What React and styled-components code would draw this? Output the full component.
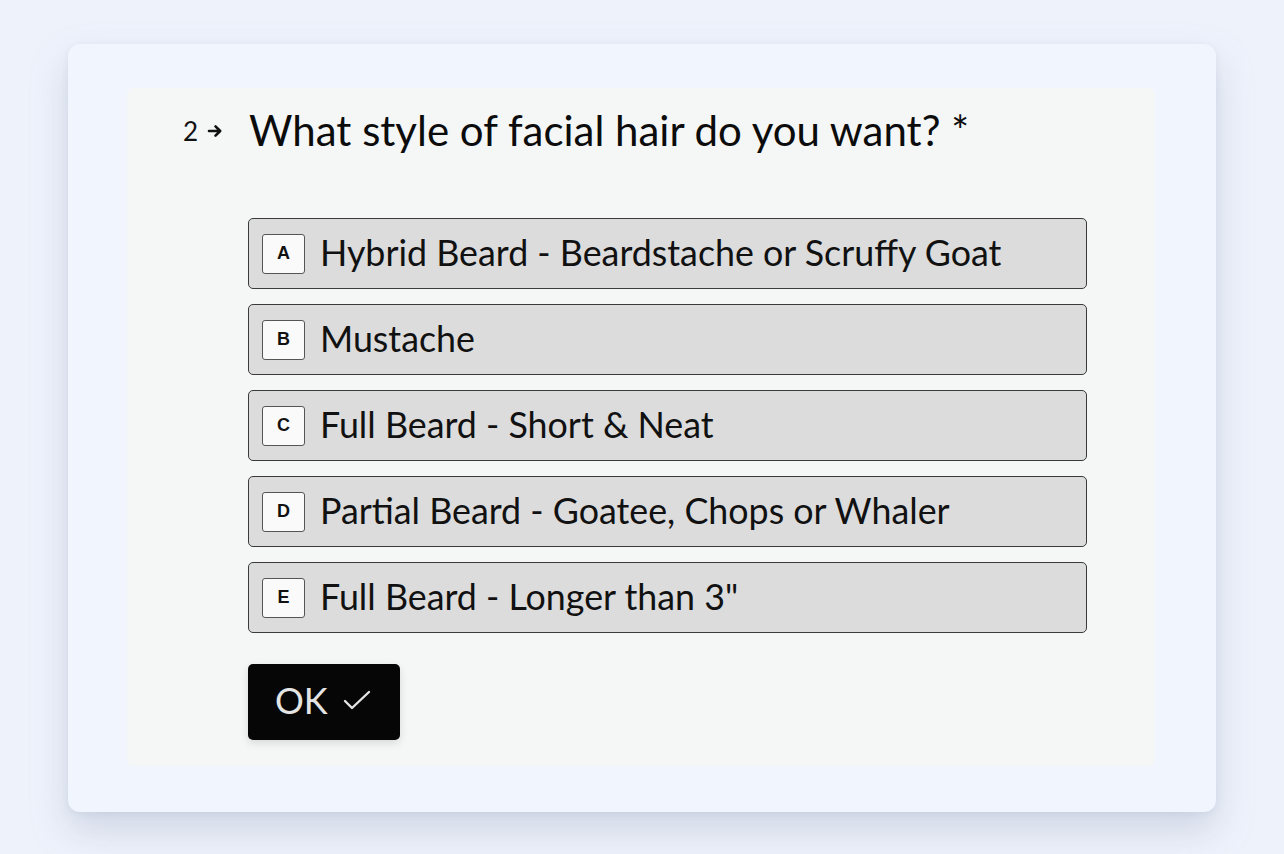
import React from "react";
import styled, { createGlobalStyle } from "styled-components";

const Global = createGlobalStyle`
  html, body { margin: 0; padding: 0; background: #eef2fb; }
  body { font-family: Lato, "Noto Sans", sans-serif; }
  * { box-sizing: border-box; }
`;

const Page = styled.div`
  padding: 44px 68px 42px 68px;
  min-height: 854px;
`;

const Card = styled.div`
  background: #f1f5fe;
  border-radius: 12px;
  padding: 44px 61px 46px 59px;
  box-shadow: 0 18px 36px rgba(150, 160, 185, 0.35), 0 2px 6px rgba(150, 160, 185, 0.15);
`;

const Panel = styled.div`
  background: #f5f6f6;
  border-radius: 6px;
  height: 678px;
  padding: 18px 0 0 56px;
`;

const QuestionRow = styled.div`
  display: flex;
  align-items: center;
  height: 50px;
`;

const Number = styled.div`
  display: flex;
  align-items: center;
  width: 66px;
  font-size: 26px;
  color: #111;
  gap: 9px;
`;

const QuestionText = styled.h1`
  margin: 0;
  font-size: 42px;
  font-weight: 400;
  color: #0c0c0c;
  letter-spacing: 0;
  padding-bottom: 2px;
`;

const Options = styled.div`
  display: flex;
  flex-direction: column;
  gap: 15px;
  margin: 62px 0 0 65px;
  width: 839px;
`;

const Option = styled.div`
  display: flex;
  align-items: center;
  height: 71px;
  background: #dcdcdc;
  border: 1px solid #3a3a3a;
  border-radius: 5px;
  padding-left: 13px;
`;

const Key = styled.div`
  width: 43px;
  height: 40px;
  background: #fafafa;
  border: 1px solid #555;
  border-radius: 3px;
  display: flex;
  align-items: center;
  justify-content: center;
  font-family: "Liberation Sans", Arial, sans-serif;
  font-weight: 700;
  font-size: 18px;
  color: #111;
`;

const Label = styled.span`
  margin-left: 15px;
  font-size: 35.8px;
  color: #111;
  padding-bottom: 3px;
`;

const OkButton = styled.button`
  margin: 31px 0 0 65px;
  width: 152px;
  height: 76px;
  background: #060606;
  border: none;
  border-radius: 5px;
  display: flex;
  align-items: center;
  padding: 0 0 5px 27px;
  gap: 15px;
  font-family: Lato, sans-serif;
  font-size: 36px;
  color: #e4e4e4;
  box-shadow: 0 3px 8px rgba(0, 0, 0, 0.12);
  cursor: pointer;
`;

const options = [
  ["A", "Hybrid Beard - Beardstache or Scruffy Goat"],
  ["B", "Mustache"],
  ["C", "Full Beard - Short & Neat"],
  ["D", "Partial Beard - Goatee, Chops or Whaler"],
  ["E", 'Full Beard - Longer than 3"'],
];

export default function App() {
  return (
    <>
      <Global />
      <Page>
        <Card>
          <Panel>
            <QuestionRow>
              <Number>
                2
                <svg width="16" height="16" viewBox="0 0 16 16" fill="none">
                  <path d="M2 8h11M8.5 3.3L13.2 8l-4.7 4.7" stroke="#111" strokeWidth="2.6" strokeLinecap="round" strokeLinejoin="round" />
                </svg>
              </Number>
              <QuestionText>What style of facial hair do you want? *</QuestionText>
            </QuestionRow>
            <Options>
              {options.map(([k, t]) => (
                <Option key={k}>
                  <Key>{k}</Key>
                  <Label>{t}</Label>
                </Option>
              ))}
            </Options>
            <OkButton>
              OK
              <svg width="28" height="22" viewBox="0 0 28 22" fill="none">
                <path d="M2 12l7 7L26 3" stroke="#e4e4e4" strokeWidth="2.4" strokeLinecap="round" strokeLinejoin="round" />
              </svg>
            </OkButton>
          </Panel>
        </Card>
      </Page>
    </>
  );
}
